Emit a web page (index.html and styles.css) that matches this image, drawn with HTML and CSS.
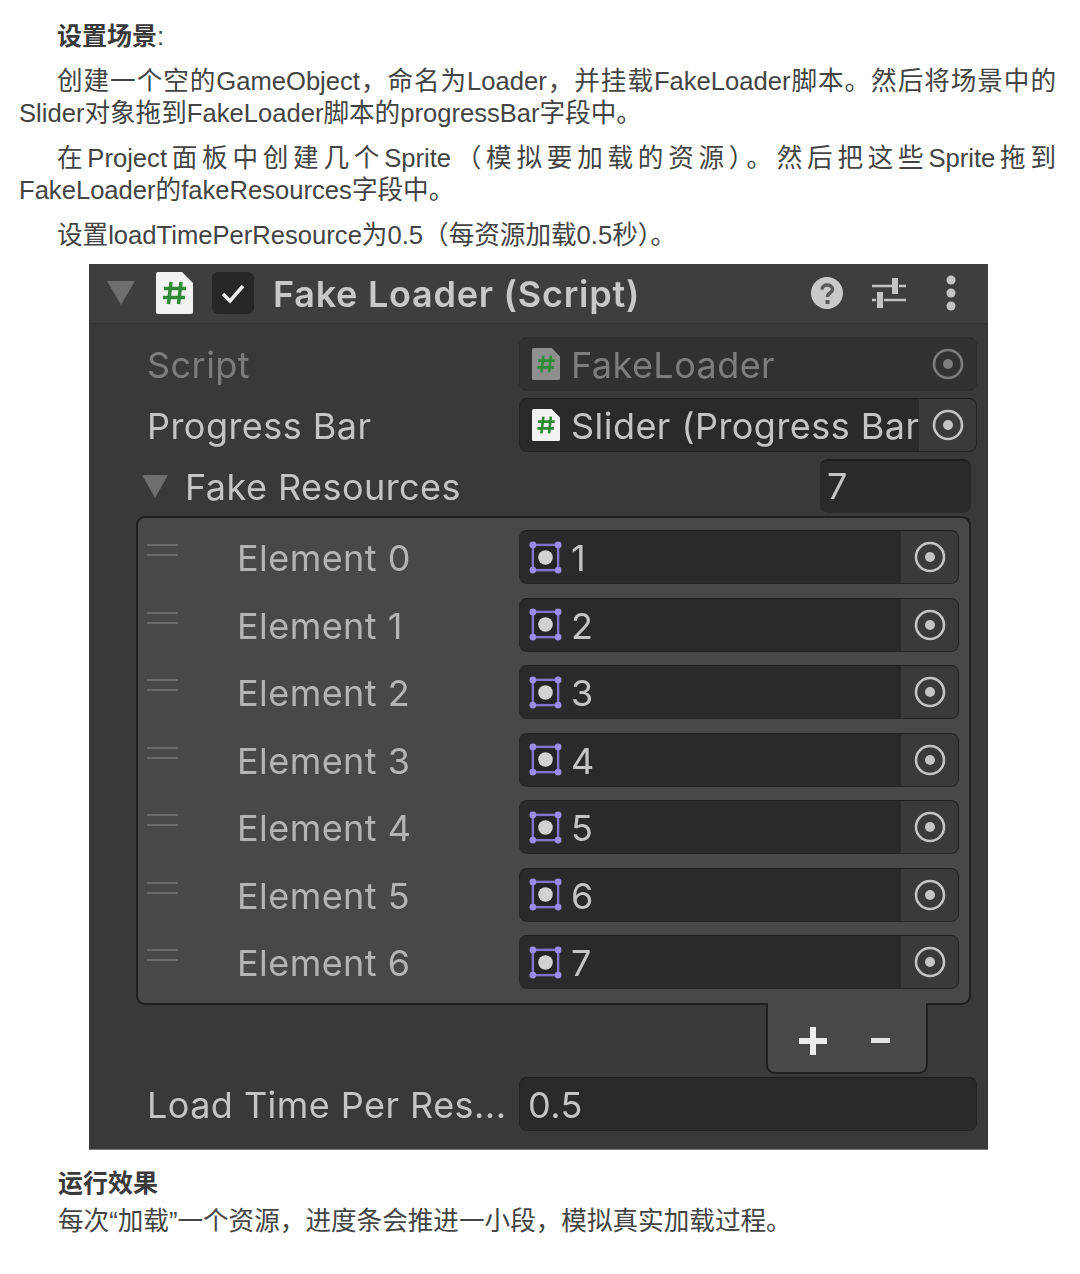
FILE: index.html
```html
<!DOCTYPE html>
<html lang="zh-CN">
<head>
  <meta charset="UTF-8" />
  <title>设置场景</title>
  <link rel="stylesheet" href="styles.css">
</head>
<body>
  <svg class="defs" width="0" height="0">
    <symbol id="script-icon" viewBox="0 0 37 42">
      <path d="M2 0H26L37 11V40Q37 42 35 42H2Q0 42 0 40V2Q0 0 2 0Z" fill="currentColor" />
      <path d="M15 10L12.500 32M25 10L22.500 32M8 16.500H30M7 25.500H29" class="hash" />
    </symbol>
    <symbol id="target-icon" viewBox="0 0 32 32">
      <circle cx="16" cy="16" r="14" fill="none" stroke="currentColor" stroke-width="2.600" />
      <circle cx="16" cy="16" r="5" fill="currentColor" />
    </symbol>
    <symbol id="sprite-icon" viewBox="0 0 34 34">
      <rect x="4" y="4" width="26" height="26" fill="#242424" stroke="#8274cc" stroke-width="2.500" />
      <circle cx="4" cy="4" r="3.500" fill="#9c8ce8" />
      <circle cx="30" cy="4" r="3.500" fill="#9c8ce8" />
      <circle cx="4" cy="30" r="3.500" fill="#9c8ce8" />
      <circle cx="30" cy="30" r="3.500" fill="#9c8ce8" />
      <circle cx="17" cy="17" r="7.500" fill="#d2d2d2" />
    </symbol>
  </svg>

  <div class="article">
    <p class="heading"><strong>设置场景</strong><span class="thin">:</span></p>
    <p><span class="first-line">创建一个空的GameObject，命名为Loader，并挂载FakeLoader脚本。然后将场景中的</span>Slider对象拖到FakeLoader脚本的progressBar字段中。</p>
    <p><span class="first-line">在Project面板中创建几个Sprite（模拟要加载的资源）。然后把这些Sprite拖到</span>FakeLoader的fakeResources字段中。</p>
    <p><span class="first-line-plain">设置loadTimePerResource为0.5（每资源加载0.5秒）。</span></p>
  </div>

  <div class="inspector">
    <div class="component-header">
      <span class="foldout foldout-big"></span>
      <svg class="header-script"><use href="#script-icon" /></svg>
      <span class="checkbox">
        <svg viewBox="0 0 42 42"><path d="M11 22L18 29L31 14" /></svg>
      </span>
      <span class="component-title">Fake Loader (Script)</span>
      <svg class="help-icon" viewBox="0 0 32 32">
        <circle cx="16" cy="16" r="16" fill="#c9c9c9" />
        <path d="M11 12.500C11 6.500 21.500 6.500 21.500 12.500C21.500 16 16.500 15.500 16.500 20" class="help-mark" />
        <rect x="14.500" y="23" width="4" height="4" fill="#5a5a5a" />
      </svg>
      <svg class="preset-icon" viewBox="0 0 34 32">
        <path d="M0 9H20M27 9H34M0 23H4M12 23H34" class="preset-line" />
        <path d="M23 1V17M8 15V31" class="preset-knob" />
      </svg>
      <svg class="menu-icon" viewBox="0 0 10 36">
        <circle cx="5" cy="5" r="4.500" />
        <circle cx="5" cy="18" r="4.500" />
        <circle cx="5" cy="31" r="4.500" />
      </svg>
    </div>

    <div class="component-body">
      <div class="row">
        <span class="label label-dim">Script</span>
        <div class="field field-dim">
          <svg class="field-script"><use href="#script-icon" /></svg>
          <span class="value">FakeLoader</span>
          <span class="picker"><svg><use href="#target-icon" /></svg></span>
        </div>
      </div>
      <div class="row">
        <span class="label">Progress Bar</span>
        <div class="field">
          <svg class="field-script"><use href="#script-icon" /></svg>
          <span class="value">Slider (Progress Bar</span>
          <span class="picker"><svg><use href="#target-icon" /></svg></span>
        </div>
      </div>
      <div class="row array-row">
        <span class="foldout"></span>
        <span class="array-label">Fake Resources</span>
        <div class="count-field">7</div>
      </div>

      <div class="list">
        <div class="list-row">
          <span class="handle"></span>
          <span class="element-label">Element 0</span>
          <div class="field">
            <svg class="sprite"><use href="#sprite-icon" /></svg>
            <span class="value">1</span>
            <span class="picker"><svg><use href="#target-icon" /></svg></span>
          </div>
        </div>
        <div class="list-row">
          <span class="handle"></span>
          <span class="element-label">Element 1</span>
          <div class="field">
            <svg class="sprite"><use href="#sprite-icon" /></svg>
            <span class="value">2</span>
            <span class="picker"><svg><use href="#target-icon" /></svg></span>
          </div>
        </div>
        <div class="list-row">
          <span class="handle"></span>
          <span class="element-label">Element 2</span>
          <div class="field">
            <svg class="sprite"><use href="#sprite-icon" /></svg>
            <span class="value">3</span>
            <span class="picker"><svg><use href="#target-icon" /></svg></span>
          </div>
        </div>
        <div class="list-row">
          <span class="handle"></span>
          <span class="element-label">Element 3</span>
          <div class="field">
            <svg class="sprite"><use href="#sprite-icon" /></svg>
            <span class="value">4</span>
            <span class="picker"><svg><use href="#target-icon" /></svg></span>
          </div>
        </div>
        <div class="list-row">
          <span class="handle"></span>
          <span class="element-label">Element 4</span>
          <div class="field">
            <svg class="sprite"><use href="#sprite-icon" /></svg>
            <span class="value">5</span>
            <span class="picker"><svg><use href="#target-icon" /></svg></span>
          </div>
        </div>
        <div class="list-row">
          <span class="handle"></span>
          <span class="element-label">Element 5</span>
          <div class="field">
            <svg class="sprite"><use href="#sprite-icon" /></svg>
            <span class="value">6</span>
            <span class="picker"><svg><use href="#target-icon" /></svg></span>
          </div>
        </div>
        <div class="list-row">
          <span class="handle"></span>
          <span class="element-label">Element 6</span>
          <div class="field">
            <svg class="sprite"><use href="#sprite-icon" /></svg>
            <span class="value">7</span>
            <span class="picker"><svg><use href="#target-icon" /></svg></span>
          </div>
        </div>
      </div>

      <div class="list-footer">
        <svg class="plus" viewBox="0 0 28 28"><path d="M14 0V28M0 14H28" /></svg>
        <span class="minus"></span>
      </div>

      <div class="row load-row">
        <span class="label">Load Time Per Res...</span>
        <div class="field">
          <span class="value value-plain">0.5</span>
        </div>
      </div>
    </div>
  </div>

  <div class="result">
    <p><strong>运行效果</strong></p>
    <p>每次“加载”一个资源，进度条会推进一小段，模拟真实加载过程。</p>
  </div>
</body>
</html>
```

FILE: styles.css
```css
body {
  margin: 0;
  background: #fff;
  color: #444;
  font-family: "Liberation Sans", "Noto Sans CJK SC", sans-serif;
  font-size: 25.600px;
  line-height: 32px;
}
p {
  margin: 0 0 13px;
}
strong {
  font-size: 25px;
  font-weight: 700;
  color: #3a3a3a;
}
.defs {
  position: absolute;
}
.thin {
  font-weight: 400;
}

/* text above the panel */
.article {
  padding: 20px 24px 0 19px;
}
.heading {
  padding-left: 38px;
}
.first-line {
  display: block;
  padding-left: 38px;
  text-align: justify;
  text-align-last: justify;
}
.first-line-plain {
  display: block;
  padding-left: 38px;
}

/* unity inspector */
.inspector {
  width: 899px;
  height: 886px;
  margin: 3px 0 0 89px;
  background: #393939;
  color: #c4c4c4;
  font-family: Inter, "Liberation Sans", sans-serif;
  font-size: 36px;
  line-height: 44px;
  letter-spacing: 0.45px;
  filter: blur(0.6px);
  box-sizing: border-box;
  border-bottom: 1px solid #7c7c7c;
}
.component-header {
  height: 60px;
  display: flex;
  align-items: center;
  background: #3e3e3e;
  border-bottom: 1px solid #333;
  box-sizing: border-box;
  padding-bottom: 1px;
}
.foldout {
  width: 0;
  height: 0;
  border-style: solid;
  border-width: 23px 13px 0;
  border-color: #6e6e6e transparent transparent;
  flex: none;
}
.foldout-big {
  border-width: 24px 14px 0;
  margin-left: 18px;
}
.header-script {
  width: 37px;
  height: 42px;
  margin-left: 21px;
  color: #f2f2f2;
}
.hash {
  fill: none;
  stroke: #2f8a36;
  stroke-width: 3.500;
}
.checkbox {
  width: 42px;
  height: 42px;
  margin-left: 19px;
  border-radius: 6px;
  background: #272727;
}
.checkbox svg {
  display: block;
  fill: none;
  stroke: #eee;
  stroke-width: 3.500;
}
.component-title {
  margin-left: 19px;
  padding-top: 2px;
  font-weight: 600;
  color: #c8c8c8;
  letter-spacing: 0.75px;
  flex: 1;
}
.help-icon {
  width: 32px;
  height: 32px;
  margin-right: 1px;
}
.preset-icon {
  width: 34px;
  height: 32px;
  margin-left: 28px;
}
.help-mark {
  fill: none;
  stroke: #5a5a5a;
  stroke-width: 3.500;
}
.preset-line {
  fill: none;
  stroke: #c4c4c4;
  stroke-width: 2.500;
}
.preset-knob {
  fill: none;
  stroke: #c4c4c4;
  stroke-width: 6;
}
.menu-icon {
  width: 10px;
  height: 36px;
  margin: 0 32px 0 40px;
  fill: #c4c4c4;
}

.component-body {
  padding-top: 13px;
}
.row {
  display: flex;
  align-items: center;
  height: 54px;
  margin-bottom: 7px;
  padding: 0 11px 0 58px;
}
.label {
  width: 372px;
  padding-top: 2px;
  flex: none;
}
.label-dim {
  color: #7d7d7d;
}

.field {
  flex: 1;
  height: 54px;
  display: flex;
  align-items: center;
  box-sizing: border-box;
  background: #2a2a2a;
  border: 1px solid #252525;
  border-top-color: #1e1e1e;
  border-radius: 8px;
  overflow: hidden;
  min-width: 0;
}
.field-dim {
  background: #313131;
  border-color: #2d2d2d;
  color: #7d7d7d;
}
.field-script {
  width: 28px;
  height: 32px;
  margin-left: 12px;
  color: #f2f2f2;
  flex: none;
}
.field-dim .field-script {
  color: #8f8f8f;
}
.value {
  flex: 1;
  margin-left: 11px;
  padding-top: 2px;
  white-space: nowrap;
}
.value-plain {
  margin-left: 8px;
}
.picker {
  width: 57px;
  height: 100%;
  background: #3a3a3a;
  display: flex;
  align-items: center;
  justify-content: center;
  flex: none;
  color: #c4c4c4;
}
.picker svg {
  width: 32px;
  height: 32px;
}
.field-dim .picker {
  background: transparent;
  color: #7d7d7d;
}

.array-row {
  margin-bottom: 3px;
  padding: 0 17px 0 53px;
}
.array-label {
  margin-left: 17px;
  padding-top: 2px;
  flex: 1;
}
.count-field {
  width: 151px;
  height: 54px;
  box-sizing: border-box;
  padding: 3px 0 0 7px;
  background: #2a2a2a;
  border-top: 2px solid #1e1e1e;
  border-radius: 8px;
}

.list {
  margin: 0 17px 0 47px;
  padding: 12px 10px 14px 0;
  background: #484848;
  border: 2px solid #1f1f1f;
  border-radius: 9px;
  display: flex;
  flex-direction: column;
  gap: 13.500px;
}
.list-row {
  display: flex;
  align-items: center;
  height: 54px;
  position: relative;
  color: #b4b4b4;
}
.handle {
  width: 31px;
  height: 8px;
  margin: 0 0 14px 9px;
  border-top: 2px solid #6b6b6b;
  border-bottom: 2px solid #6b6b6b;
  flex: none;
}
.element-label {
  width: 282px;
  margin-left: 59px;
  padding-top: 2px;
  flex: none;
}
.list-row .field {
  color: #c4c4c4;
}
.sprite {
  width: 33px;
  height: 33px;
  margin-left: 9px;
  flex: none;
}
.sprite + .value {
  margin-left: 9px;
}

.list-footer {
  width: 162px;
  height: 71px;
  margin: -2px 0 0 677px;
  box-sizing: border-box;
  display: flex;
  align-items: center;
  background: #484848;
  border: 2px solid #1f1f1f;
  border-top: none;
  border-radius: 0 0 9px 9px;
}
.plus {
  width: 28px;
  height: 28px;
  margin: 6px 0 0 31px;
  fill: none;
  stroke: #ececec;
  stroke-width: 6;
}
.minus {
  width: 19px;
  height: 5px;
  margin: 6px 0 0 44px;
  background: #e4e4e4;
}
.load-row {
  margin-top: 3px;
}

/* text below the panel */
.result {
  padding: 17px 0 0 58px;
}
.result p {
  margin: 0 0 6px;
}
```
